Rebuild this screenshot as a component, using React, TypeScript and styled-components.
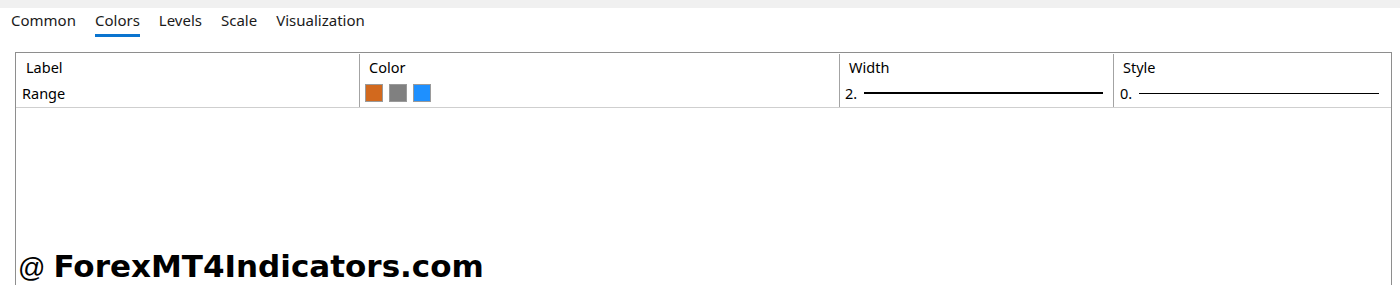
import React from "react";
import styled, { createGlobalStyle } from "styled-components";

const Global = createGlobalStyle`
  html, body { margin: 0; padding: 0; background: #ffffff; }
  body { font-family: "Noto Sans", "Liberation Sans", sans-serif; color: #000; overflow: hidden; }
`;

const Page = styled.div`
  width: 1400px;
  height: 285px;
  overflow: hidden;
  background: #ffffff;
`;

const TopStrip = styled.div`
  height: 8px;
  background: #f0f0f0;
`;

const TabBar = styled.div`
  display: flex;
  gap: 19px;
  padding-left: 11px;
`;

const Tab = styled.div<{ $active?: boolean }>`
  padding-top: 2px;
  padding-bottom: 4px;
  font-size: 15px;
  line-height: 20px;
  color: #1a1a1a;
  border-bottom: 3px solid ${(p) => (p.$active ? "#0a74cf" : "transparent")};
`;

const Panel = styled.div`
  margin-top: 15px;
  margin-left: 15px;
  width: 1375px;
  height: 260px;
  border: 1px solid #8e8e8e;
  background: #ffffff;
`;

const Table = styled.div`
  display: grid;
  grid-template-columns: 343px 480px 274px 1fr;
  border-bottom: 1px solid #cfcfcf;
`;

const Column = styled.div<{ $divider?: boolean }>`
  display: flex;
  flex-direction: column;
  margin-top: 1px;
  border-left: ${(p) => (p.$divider ? "1px solid #a3a3a3" : "none")};
`;

const HeadCell = styled.div<{ $pad: number }>`
  height: 25px;
  display: flex;
  align-items: center;
  padding-left: ${(p) => p.$pad}px;
  font-size: 14.5px;
  color: #000;
`;

const ValueCell = styled.div<{ $pad: number; $right?: number }>`
  height: 28px;
  display: flex;
  align-items: center;
  padding-left: ${(p) => p.$pad}px;
  padding-right: ${(p) => p.$right ?? 0}px;
  font-size: 14.5px;
  color: #000;
`;

const Swatch = styled.div<{ $color: string }>`
  width: 16px;
  height: 16px;
  border: 1px solid #9a9a9a;
  background: ${(p) => p.$color};
  margin-right: 6px;
`;

const Line = styled.div<{ $thick: number }>`
  flex: 1;
  height: ${(p) => p.$thick}px;
  background: #000;
  margin-left: 7px;
`;

const Watermark = styled.div`
  margin-top: 143px;
  padding-left: 2px;
  display: flex;
  align-items: baseline;
  line-height: 31px;
  white-space: nowrap;
  color: #000;
`;

const At = styled.span`
  font-family: "Liberation Sans", Arial, sans-serif;
  font-size: 27px;
  margin-right: 8px;
`;

const Site = styled.span`
  font-family: "DejaVu Sans", Verdana, sans-serif;
  font-weight: bold;
  font-size: 31px;
`;

export default function App() {
  const tabs = ["Common", "Colors", "Levels", "Scale", "Visualization"];
  return (
    <Page>
      <Global />
      <TopStrip />
      <TabBar>
        {tabs.map((t) => (
          <Tab key={t} $active={t === "Colors"}>
            {t}
          </Tab>
        ))}
      </TabBar>
      <Panel>
        <Table>
          <Column>
            <HeadCell $pad={10}>Label</HeadCell>
            <ValueCell $pad={6}>Range</ValueCell>
          </Column>
          <Column $divider>
            <HeadCell $pad={9}>Color</HeadCell>
            <ValueCell $pad={5}>
              <Swatch $color="#d2691e" />
              <Swatch $color="#808080" />
              <Swatch $color="#1e90ff" />
            </ValueCell>
          </Column>
          <Column $divider>
            <HeadCell $pad={9}>Width</HeadCell>
            <ValueCell $pad={5} $right={10}>
              2.
              <Line $thick={2} />
            </ValueCell>
          </Column>
          <Column $divider>
            <HeadCell $pad={9}>Style</HeadCell>
            <ValueCell $pad={6} $right={12}>
              0.
              <Line $thick={1} />
            </ValueCell>
          </Column>
        </Table>
        <Watermark>
          <At>@</At>
          <Site>ForexMT4Indicators.com</Site>
        </Watermark>
      </Panel>
    </Page>
  );
}
